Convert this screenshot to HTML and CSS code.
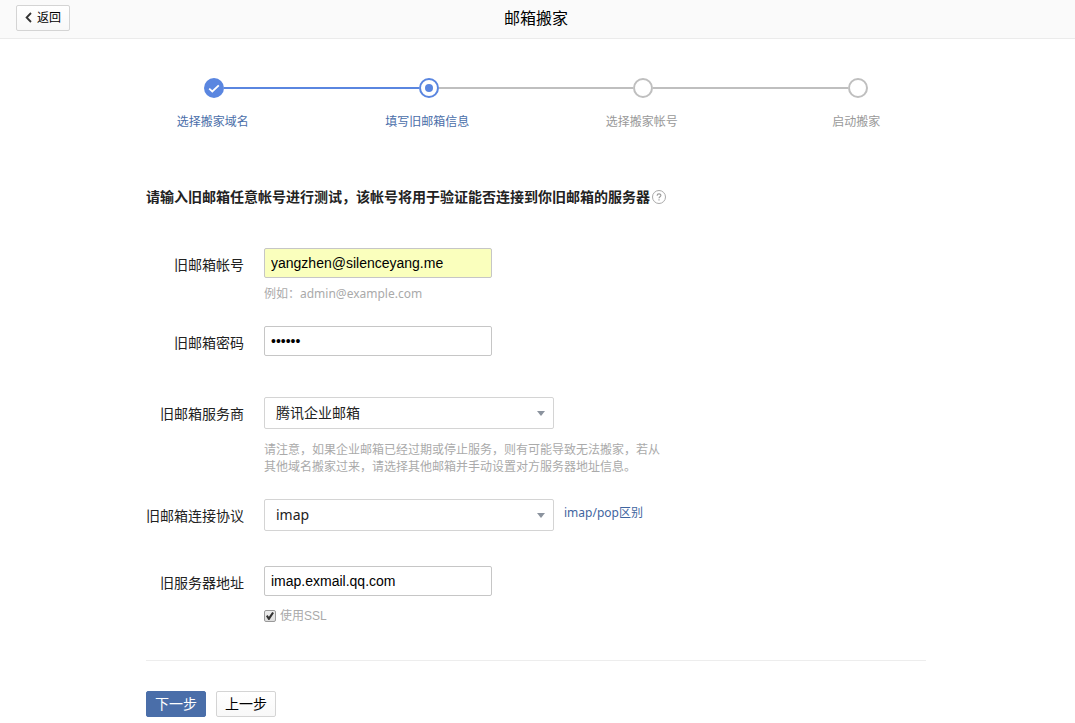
FILE: index.html
```
<!DOCTYPE html>
<html lang="zh-CN">
<head>
<meta charset="utf-8">
<title>邮箱搬家</title>
<link rel="stylesheet" href="styles.css">
</head>
<body>
<header class="topbar">
  <button type="button" class="btn btn-back">
    <svg class="btn-back-icon" width="7" height="11" viewBox="0 0 7 11" aria-hidden="true"><path d="M6 1 1.600 5.500 6 10" fill="none" stroke="#333" stroke-width="1.800"/></svg>
    返回
  </button>
  <h1 class="topbar-title">邮箱搬家</h1>
</header>

<main class="page">
  <ol class="steps">
    <li class="step is-done">
      <svg class="step-dot" width="20" height="20" viewBox="0 0 20 20" aria-hidden="true"><circle cx="10" cy="10" r="10" fill="#5a86e0"/><path d="M5.200 10.700l3.100 2.800 6.500-6.200" fill="none" stroke="#fff" stroke-width="1.800"/></svg>
      <span class="step-label">选择搬家域名</span>
    </li>
    <li class="step is-current" aria-current="step">
      <svg class="step-dot" width="20" height="20" viewBox="0 0 20 20" aria-hidden="true"><circle cx="10" cy="10" r="9" fill="#fff" stroke="#5a86e0" stroke-width="2"/><circle cx="10" cy="10" r="4" fill="#5a86e0"/></svg>
      <span class="step-label">填写旧邮箱信息</span>
    </li>
    <li class="step">
      <svg class="step-dot" width="20" height="20" viewBox="0 0 20 20" aria-hidden="true"><circle cx="10" cy="10" r="9" fill="#fff" stroke="#bfbfbf" stroke-width="2"/></svg>
      <span class="step-label">选择搬家帐号</span>
    </li>
    <li class="step">
      <svg class="step-dot" width="20" height="20" viewBox="0 0 20 20" aria-hidden="true"><circle cx="10" cy="10" r="9" fill="#fff" stroke="#bfbfbf" stroke-width="2"/></svg>
      <span class="step-label">启动搬家</span>
    </li>
  </ol>

  <form class="form">
    <h2 class="form-title">请输入旧邮箱任意帐号进行测试，该帐号将用于验证能否连接到你旧邮箱的服务器<svg class="help-icon" width="16" height="16" viewBox="0 0 16 16" aria-hidden="true"><circle cx="8" cy="8" r="6.500" fill="none" stroke="#aaa"/><path d="M6.100 6.700c0-2.500 3.800-2.400 3.800-.2 0 1.200-1.900 1.300-1.900 2.700M8 10.200v1.200" fill="none" stroke="#999" stroke-width="1.100"/></svg></h2>

    <div class="row">
      <label class="row-label" for="account">旧邮箱帐号</label>
      <div class="row-body">
        <input class="text is-filled" id="account" type="text" value="yangzhen@silenceyang.me">
        <p class="hint">例如：admin@example.com</p>
      </div>
    </div>

    <div class="row row-wide">
      <label class="row-label" for="password">旧邮箱密码</label>
      <div class="row-body">
        <input class="text" id="password" type="password" value="123456">
      </div>
    </div>

    <div class="row">
      <label class="row-label" for="provider">旧邮箱服务商</label>
      <div class="row-body">
        <div class="select-box">
          <select class="select" id="provider"><option>腾讯企业邮箱</option></select>
          <svg class="select-arrow" width="8" height="5" viewBox="0 0 8 5" aria-hidden="true"><path d="M0 0h8L4 5z" fill="#8b939e"/></svg>
        </div>
        <p class="hint hint-long">请注意，如果企业邮箱已经过期或停止服务，则有可能导致无法搬家，若从其他域名搬家过来，请选择其他邮箱并手动设置对方服务器地址信息。</p>
      </div>
    </div>

    <div class="row row-mid">
      <label class="row-label" for="protocol">旧邮箱连接协议</label>
      <div class="row-body row-inline">
        <div class="select-box">
          <select class="select" id="protocol"><option>imap</option></select>
          <svg class="select-arrow" width="8" height="5" viewBox="0 0 8 5" aria-hidden="true"><path d="M0 0h8L4 5z" fill="#8b939e"/></svg>
        </div>
        <a class="link" href="#">imap/pop区别</a>
      </div>
    </div>

    <div class="row row-mid">
      <label class="row-label" for="server">旧服务器地址</label>
      <div class="row-body">
        <input class="text" id="server" type="text" value="imap.exmail.qq.com">
        <label class="check"><input class="check-box" type="checkbox" checked>使用SSL</label>
      </div>
    </div>

    <div class="actions">
      <button type="button" class="btn btn-primary">下一步</button>
      <button type="button" class="btn btn-plain">上一步</button>
    </div>
  </form>
</main>
</body>
</html>
```
FILE: styles.css
```
* {
  box-sizing: border-box;
}

body {
  margin: 0;
  background: #fff;
  color: #222;
  font: 14px/20px "Noto Sans", "Noto Sans CJK SC", sans-serif;
}

h1, h2, p, ol {
  margin: 0;
  padding: 0;
}

.btn {
  height: 26px;
  padding: 0 8px;
  border: 1px solid #d4d4d4;
  border-radius: 2px;
  background: linear-gradient(#fff, #f8f8f8);
  color: #000;
  font: 14px/20px "Noto Sans", "Noto Sans CJK SC", sans-serif;
}

.topbar {
  display: grid;
  grid-template-columns: 1fr auto 1fr;
  align-items: center;
  height: 39px;
  padding: 0 19px 3px 16px;
  border-bottom: 1px solid #ebebeb;
  background: #fafafa;
}

.topbar .btn-back {
  display: flex;
  align-items: center;
  justify-self: start;
  gap: 5px;
  font-size: 12px;
}

.topbar-title {
  color: #000;
  font-size: 16px;
  font-weight: 400;
}

.page {
  padding: 39px 3px 0 0;
}

.steps {
  display: grid;
  grid-template-columns: repeat(4, 1fr);
  max-width: 858px;
  margin: 0 auto 56px;
  list-style: none;
}

.step {
  display: flex;
  position: relative;
  flex-direction: column;
  align-items: center;
  gap: 15px;
  color: #999;
}

.step:not(:last-child)::after {
  position: absolute;
  top: 9px;
  left: calc(50% + 10px);
  width: calc(100% - 20px);
  height: 2px;
  background: #bfbfbf;
  content: "";
}

.step.is-done::after {
  background: #5a86e0;
}

.is-done,
.is-current {
  color: #4a6ea9;
}

.step-label {
  padding-right: 3px;
  font-size: 12px;
  line-height: 18px;
}

.form {
  max-width: 780px;
  margin: 0 auto;
}

.form-title {
  display: flex;
  align-items: center;
  margin-bottom: 41px;
  font-size: 14px;
  font-weight: 700;
}

.help-icon {
  margin-left: 1px;
}

.row {
  display: grid;
  grid-template-columns: 98px 1fr;
  gap: 20px;
  margin-bottom: 24px;
}

.row-wide {
  margin-bottom: 41px;
}

.row-mid {
  margin-bottom: 35px;
}

.row-label {
  padding-top: 7px;
  text-align: right;
}

.row-inline {
  display: flex;
  gap: 10px;
}

.text {
  display: block;
  width: 228px;
  height: 30px;
  padding: 0 6px;
  border: 1px solid #c6c6c6;
  border-radius: 2px;
  background: #fff;
  color: #000;
  font: 14px/20px "Liberation Sans", Arial, sans-serif;
}

.text.is-filled {
  background: #faffbd;
}

.hint {
  margin-top: 7px;
  color: #aaa;
  font-size: 12px;
  line-height: 17px;
}

.hint-long {
  max-width: 400px;
  margin-top: 12px;
}

.select-box {
  position: relative;
  width: 290px;
}

.select {
  display: block;
  width: 100%;
  height: 32px;
  padding: 0 30px 0 11px;
  border: 1px solid #d4d4d4;
  border-radius: 2px;
  appearance: none;
  background: #fff;
  color: #222;
  font: 14px/20px "Noto Sans", "Noto Sans CJK SC", sans-serif;
}

.select-arrow {
  position: absolute;
  top: 14px;
  right: 9px;
  pointer-events: none;
}

.link {
  padding-top: 4px;
  color: #3f65a0;
  font-size: 12px;
  text-decoration: none;
}

.check {
  display: flex;
  align-items: center;
  gap: 4px;
  margin-top: 11px;
  color: #aaa;
  font: 12px/18px "Liberation Sans", "Noto Sans CJK SC", sans-serif;
}

.check-box {
  display: grid;
  width: 12px;
  height: 12px;
  margin: 0;
  border: 1px solid #9a9a9a;
  border-radius: 2px;
  appearance: none;
  background: linear-gradient(#eee, #ddd);
  place-items: center;
}

.check-box:checked::before {
  width: 8px;
  height: 8px;
  background: #333;
  clip-path: polygon(0 52%, 18% 38%, 36% 60%, 78% 0, 100% 14%, 42% 100%, 30% 100%);
  content: "";
}

.actions {
  display: flex;
  gap: 10px;
  padding-top: 30px;
  border-top: 1px solid #ededed;
}

.actions .btn-primary {
  border-color: #4a6ea9;
  background: #4a6ea9;
  color: #fff;
}
```
